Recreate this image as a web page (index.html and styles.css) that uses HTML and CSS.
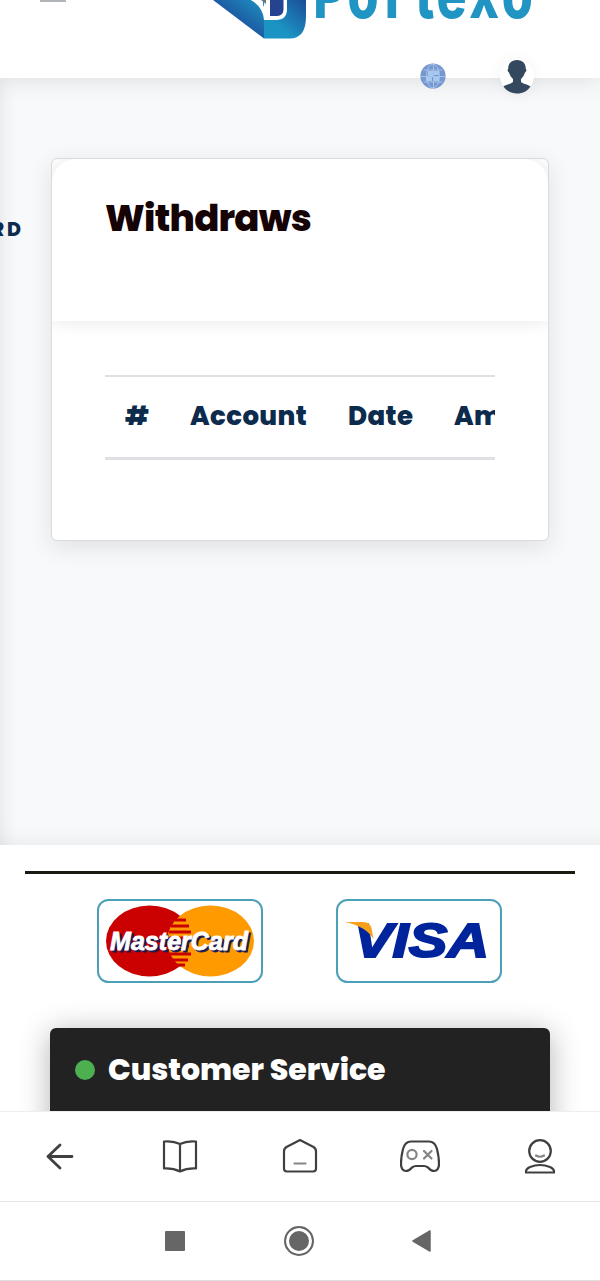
FILE: index.html
```html
<!doctype html>
<html lang="en">
  <head>
    <meta charset="utf-8"/>
    <meta name="viewport" content="width=device-width, initial-scale=1.0">
    <title>Withdraws</title>
    <link rel="stylesheet" href="styles.css">
  </head>
  <body>
    <header class="topbar">
      <div class="menu-bar"></div>
      <svg class="logo" width="330" height="42" viewBox="0 0 330 42">
        <defs>
          <linearGradient id="fold" x1="0" y1="1" x2="1" y2="0">
            <stop offset="0" stop-color="#174390"/>
            <stop offset=".45" stop-color="#1d57a0"/>
            <stop offset="1" stop-color="#1d93c3"/>
          </linearGradient>
          <linearGradient id="side" x1="0" y1="1" x2="1" y2="0">
            <stop offset=".35" stop-color="#1b93c3"/>
            <stop offset="1" stop-color="#1b4c96"/>
          </linearGradient>
        </defs>
        <path d="M53 0H96V16Q96 38.500 80 38.500H54Z" fill="url(#side)"/>
        <path d="M54 0H77V9Q77 20 66 20H54Z" fill="#fff"/>
        <path d="M60 0H73.500V9Q73.500 16 67 16H60Z" fill="#25438f"/>
        <path d="M51 0H56V4Z" fill="#6e7480"/>
        <path d="M3 0H41Q54 6 54 17V38.500Z" fill="url(#fold)"/>
        <path d="M41 0H46Q53 4 56 10V20H54Q53 7 41 0Z" fill="#fff"/>
        <text class="logo-text" transform="scale(.76 1)" y="17.500" x="136 181 230 270 298 341 384">Portexo</text>
      </svg>
      <div class="top-icons">
        <svg width="26" height="26" viewBox="0 0 26 26">
          <circle cx="13" cy="13" r="12.600" fill="#7598d0"/>
          <path d="M8 8h5v5H8zM14 8h5v4h-5zM6 14h6v4H6zM14 14h5v4h-5z" fill="#a5caf2"/>
          <g fill="none" stroke="#b4c9eb" stroke-width=".8">
            <path d="M13.500 1v24M1 13.500h24M3.500 7h19M3.500 19h19"/>
            <ellipse cx="13" cy="13" rx="6.500" ry="12"/>
          </g>
        </svg>
        <span class="avatar">
          <svg width="34" height="34" viewBox="0 0 34 34">
            <path d="M17 0c6 0 9 4 8.800 9 1 .2.600 3-.8 3.500-.8 3-2.400 5-4 6.500v3c3 2.500 7 2.300 9.500 4.500C27.500 31 23 33.500 17 33.500S6.500 31 3.500 26.500C6 24.300 10 24.500 13 22v-3c-1.600-1.500-3.200-3.500-4-6.500-1.400-.5-1.800-3.300-.8-3.500C8 4 11 0 17 0z" fill="#34495e"/>
          </svg>
        </span>
      </div>
    </header>

    <main class="content">
      <div class="side-label">DASHBOARD</div>
      <section class="card">
        <div class="card-head">
          <h1>Withdraws</h1>
        </div>
        <div class="card-body">
          <div class="table-wrap">
            <table>
              <thead>
                <tr>
                  <th class="col-id">#</th>
                  <th class="col-account">Account</th>
                  <th class="col-date">Date</th>
                  <th class="col-amount">Amount</th>
                </tr>
              </thead>
            </table>
          </div>
        </div>
      </section>
    </main>

    <footer class="site-footer">
      <hr>
      <div class="payments">
        <svg width="168" height="86" viewBox="0 0 168 86">
          <rect x="2" y="2" width="164" height="82" rx="10.500" fill="#fff" stroke="#4c9fb8" stroke-width="2"/>
          <ellipse cx="53.500" cy="43" rx="43.500" ry="35.500" fill="#cb0000"/>
          <ellipse cx="114.500" cy="43" rx="43.500" ry="35.500" fill="#ff9a00"/>
          <path d="M79 22h11M75 28h18M73 34h22M71 40h22M71 48h22M73 56h22M75 62h17M79 67h10" stroke="#cb0000" stroke-width="3"/>
          <text class="mc-text mc-shadow" x="16" y="53.500" textLength="138" lengthAdjust="spacingAndGlyphs">MasterCard</text>
          <text class="mc-text" x="14" y="51.500" textLength="138" lengthAdjust="spacingAndGlyphs">MasterCard</text>
        </svg>
        <svg width="168" height="86" viewBox="0 0 168 86">
          <rect x="2" y="2" width="164" height="82" rx="10.500" fill="#fff" stroke="#4c9fb8" stroke-width="2"/>
          <text class="visa-text" x="19" y="59" textLength="135" lengthAdjust="spacingAndGlyphs">VISA</text>
          <path d="M10 24H28Q35 24 36.500 30L38.500 41Q31 28.500 10 24Z" fill="#f9a01b"/>
        </svg>
      </div>
      <div class="chat">
        <span class="dot"></span>
        <span class="chat-title">Customer Service</span>
      </div>
    </footer>

    <nav class="browser-nav">
      <svg width="40" height="40" viewBox="0 0 40 40">
        <path class="heavy" d="M32 19.500H8M20 8L8 19.500l12 11.500"/>
      </svg>
      <svg width="40" height="40" viewBox="0 0 40 40">
        <path d="M20 7Q13 3.500 4 4.500v27q9-.5 16 3 7-3.500 16-3v-27Q27 3.500 20 7zV34"/>
      </svg>
      <svg width="40" height="40" viewBox="0 0 40 40">
        <path d="M20 3L6.500 10Q4 11.500 4 14.500V31.500Q4 34.500 7 34.500H33Q36 34.500 36 31.500V14.500Q36 11.500 33.500 10Z"/>
        <path class="soft" d="M14.500 26.500h11"/>
      </svg>
      <svg width="40" height="40" viewBox="0 0 40 40">
        <path d="M11 4.500H29Q35 4.500 37 12Q39 20 39 27Q39 33.500 34 34Q31 34 28 30.500Q26 29 24 29H16Q14 29 12 30.500Q9 34 6 34Q1 33.500 1 27Q1 20 3 12Q5 4.500 11 4.500Z"/>
        <circle class="soft" cx="12" cy="17.500" r="4.600"/>
        <path class="soft" d="M24 14l7.500 7.500M31.500 14l-7.500 7.500"/>
      </svg>
      <svg width="40" height="40" viewBox="0 0 40 40">
        <circle cx="20" cy="14" r="10.800"/>
        <path class="soft" d="M16 18.500q4 2.500 8 0"/>
        <path d="M6 35.500Q5.500 32 10 30Q20 26 30 30Q34.500 32 34 35.500Z"/>
      </svg>
    </nav>

    <div class="system-nav">
      <span class="square"></span>
      <span class="ring"></span>
      <svg width="20" height="24" viewBox="0 0 20 24">
        <path d="M18 2V22L1 12Z" fill="#666" stroke="#666" stroke-width="1.500" stroke-linejoin="round"/>
      </svg>
    </div>
  </body>
</html>
```
FILE: styles.css
```css
* {
  box-sizing: border-box;
}

html, body {
  margin: 0;
  padding: 0;
}

body {
  width: 600px;
  height: 1281px;
  overflow: hidden;
  background-color: #fff;
  font-family: Poppins, Inter, "Liberation Sans", sans-serif;
  color: #0d2b4d;
}

svg {
  display: block;
}

/* top bar */

.topbar {
  position: relative;
  z-index: 2;
  display: flex;
  height: 78px;
  padding-left: 40px;
  background-color: #fff;
  box-shadow: 0 0 25px rgba(0, 0, 0, .13);
}

.menu-bar {
  width: 26px;
  height: 2px;
  margin-right: 144px;
  background-color: #b1b4b8;
}

.logo-text {
  font-family: Inter, "Liberation Sans", sans-serif;
  font-size: 66px;
  font-weight: 800;
  fill: #2095c4;
}

.top-icons {
  position: absolute;
  top: 59px;
  left: 420px;
  display: flex;
  align-items: center;
  gap: 54px;
}

.avatar {
  display: flex;
  justify-content: center;
  width: 34px;
  height: 34px;
  border-radius: 50%;
  background-color: #fff;
  box-shadow: 0 1px 15px rgba(0, 0, 0, .06);
}

.avatar svg {
  margin-top: 1px;
}

/* page */

.content {
  position: relative;
  height: 767px;
  padding: 80px 51px 0;
  overflow: hidden;
  background-color: #f8f9fb;
  box-shadow: inset 20px 0 20px -20px rgba(0, 0, 0, .1), inset 0 -20px 25px -20px rgba(0, 0, 0, .08);
}

.side-label {
  position: absolute;
  top: 140px;
  right: 576px;
  font-size: 19px;
  font-weight: 800;
  line-height: 24px;
  letter-spacing: 3px;
}

.card {
  height: 383px;
  border: 1px solid #d9dbde;
  border-radius: 6px;
  background-color: #fff;
  box-shadow: 0 6px 25px rgba(0, 0, 0, .1);
}

.card-head {
  height: 162px;
  padding: 36px 53px 0;
  border-radius: 24px 24px 0 0;
  box-shadow: 0 0 18px rgba(0, 0, 0, .1);
  clip-path: inset(0 0 -20px 0);
}

h1 {
  margin: 0;
  font-size: 37px;
  font-weight: 800;
  line-height: 46px;
  letter-spacing: -.75px;
  color: #150306;
}

.card-body {
  padding: 54px 53px 0;
}

.table-wrap {
  overflow: hidden;
}

table {
  width: 480px;
  table-layout: fixed;
  border-collapse: collapse;
}

th {
  height: 82px;
  padding: 0 0 0 20px;
  border-top: 2px solid #dee0e3;
  border-bottom: 3px solid #dee0e3;
  font-size: 26px;
  font-weight: 800;
  letter-spacing: .4px;
  text-align: left;
}

.col-id {
  width: 65px;
}

.col-account {
  width: 158px;
}

.col-date {
  width: 106px;
}

/* footer */

.site-footer {
  height: 266px;
  padding: 26px 25px 0;
  overflow: hidden;
}

hr {
  height: 3px;
  margin: 0;
  border: 0;
  background-color: #191b13;
}

.payments {
  display: flex;
  gap: 71px;
  padding: 24px 0 0 71px;
}

.mc-text {
  font-family: "Liberation Sans", sans-serif;
  font-size: 25px;
  font-weight: 700;
  font-style: italic;
  fill: #fff;
  stroke: #fff;
  stroke-width: .8px;
}

.mc-shadow {
  fill: #1c1b52;
  stroke: #1c1b52;
}

.visa-text {
  font-family: "Liberation Sans", sans-serif;
  font-size: 49px;
  font-weight: 700;
  font-style: italic;
  fill: #00249c;
  stroke: #00249c;
  stroke-width: 2px;
}

.chat {
  display: flex;
  align-items: center;
  height: 110px;
  margin: 44px 25px 0;
  padding: 0 25px 27px;
  border-radius: 6px 6px 0 0;
  background-color: #222;
  box-shadow: 0 4px 30px rgba(0, 0, 0, .3);
}

.dot {
  width: 20px;
  height: 20px;
  margin-right: 13px;
  border-radius: 50%;
  background-color: #4caf50;
}

.chat-title {
  font-size: 30px;
  font-weight: 800;
  color: #fff;
}

/* phone bars */

.browser-nav {
  position: relative;
  z-index: 2;
  display: flex;
  justify-content: space-between;
  align-items: center;
  height: 91px;
  padding: 0 40px;
  border-top: 1px solid #eee;
  border-bottom: 1px solid #e4e4e4;
  background-color: #fff;
}

.browser-nav svg {
  fill: none;
  stroke: #404040;
  stroke-width: 2.2;
  stroke-linecap: round;
  stroke-linejoin: round;
}

.browser-nav .heavy {
  stroke-width: 2.8;
}

.browser-nav .soft {
  stroke: #858585;
}

.system-nav {
  display: flex;
  align-items: center;
  height: 79px;
  padding-left: 165px;
  border-bottom: 1px solid #ddd;
}

.square {
  width: 20px;
  height: 20px;
  border-radius: 1px;
  background-color: #666;
}

.ring {
  width: 30px;
  height: 30px;
  margin: 0 98px 0 99px;
  border: 2px solid #666;
  border-radius: 50%;
  background-color: #666;
  box-shadow: inset 0 0 0 3px #fff;
}
```
